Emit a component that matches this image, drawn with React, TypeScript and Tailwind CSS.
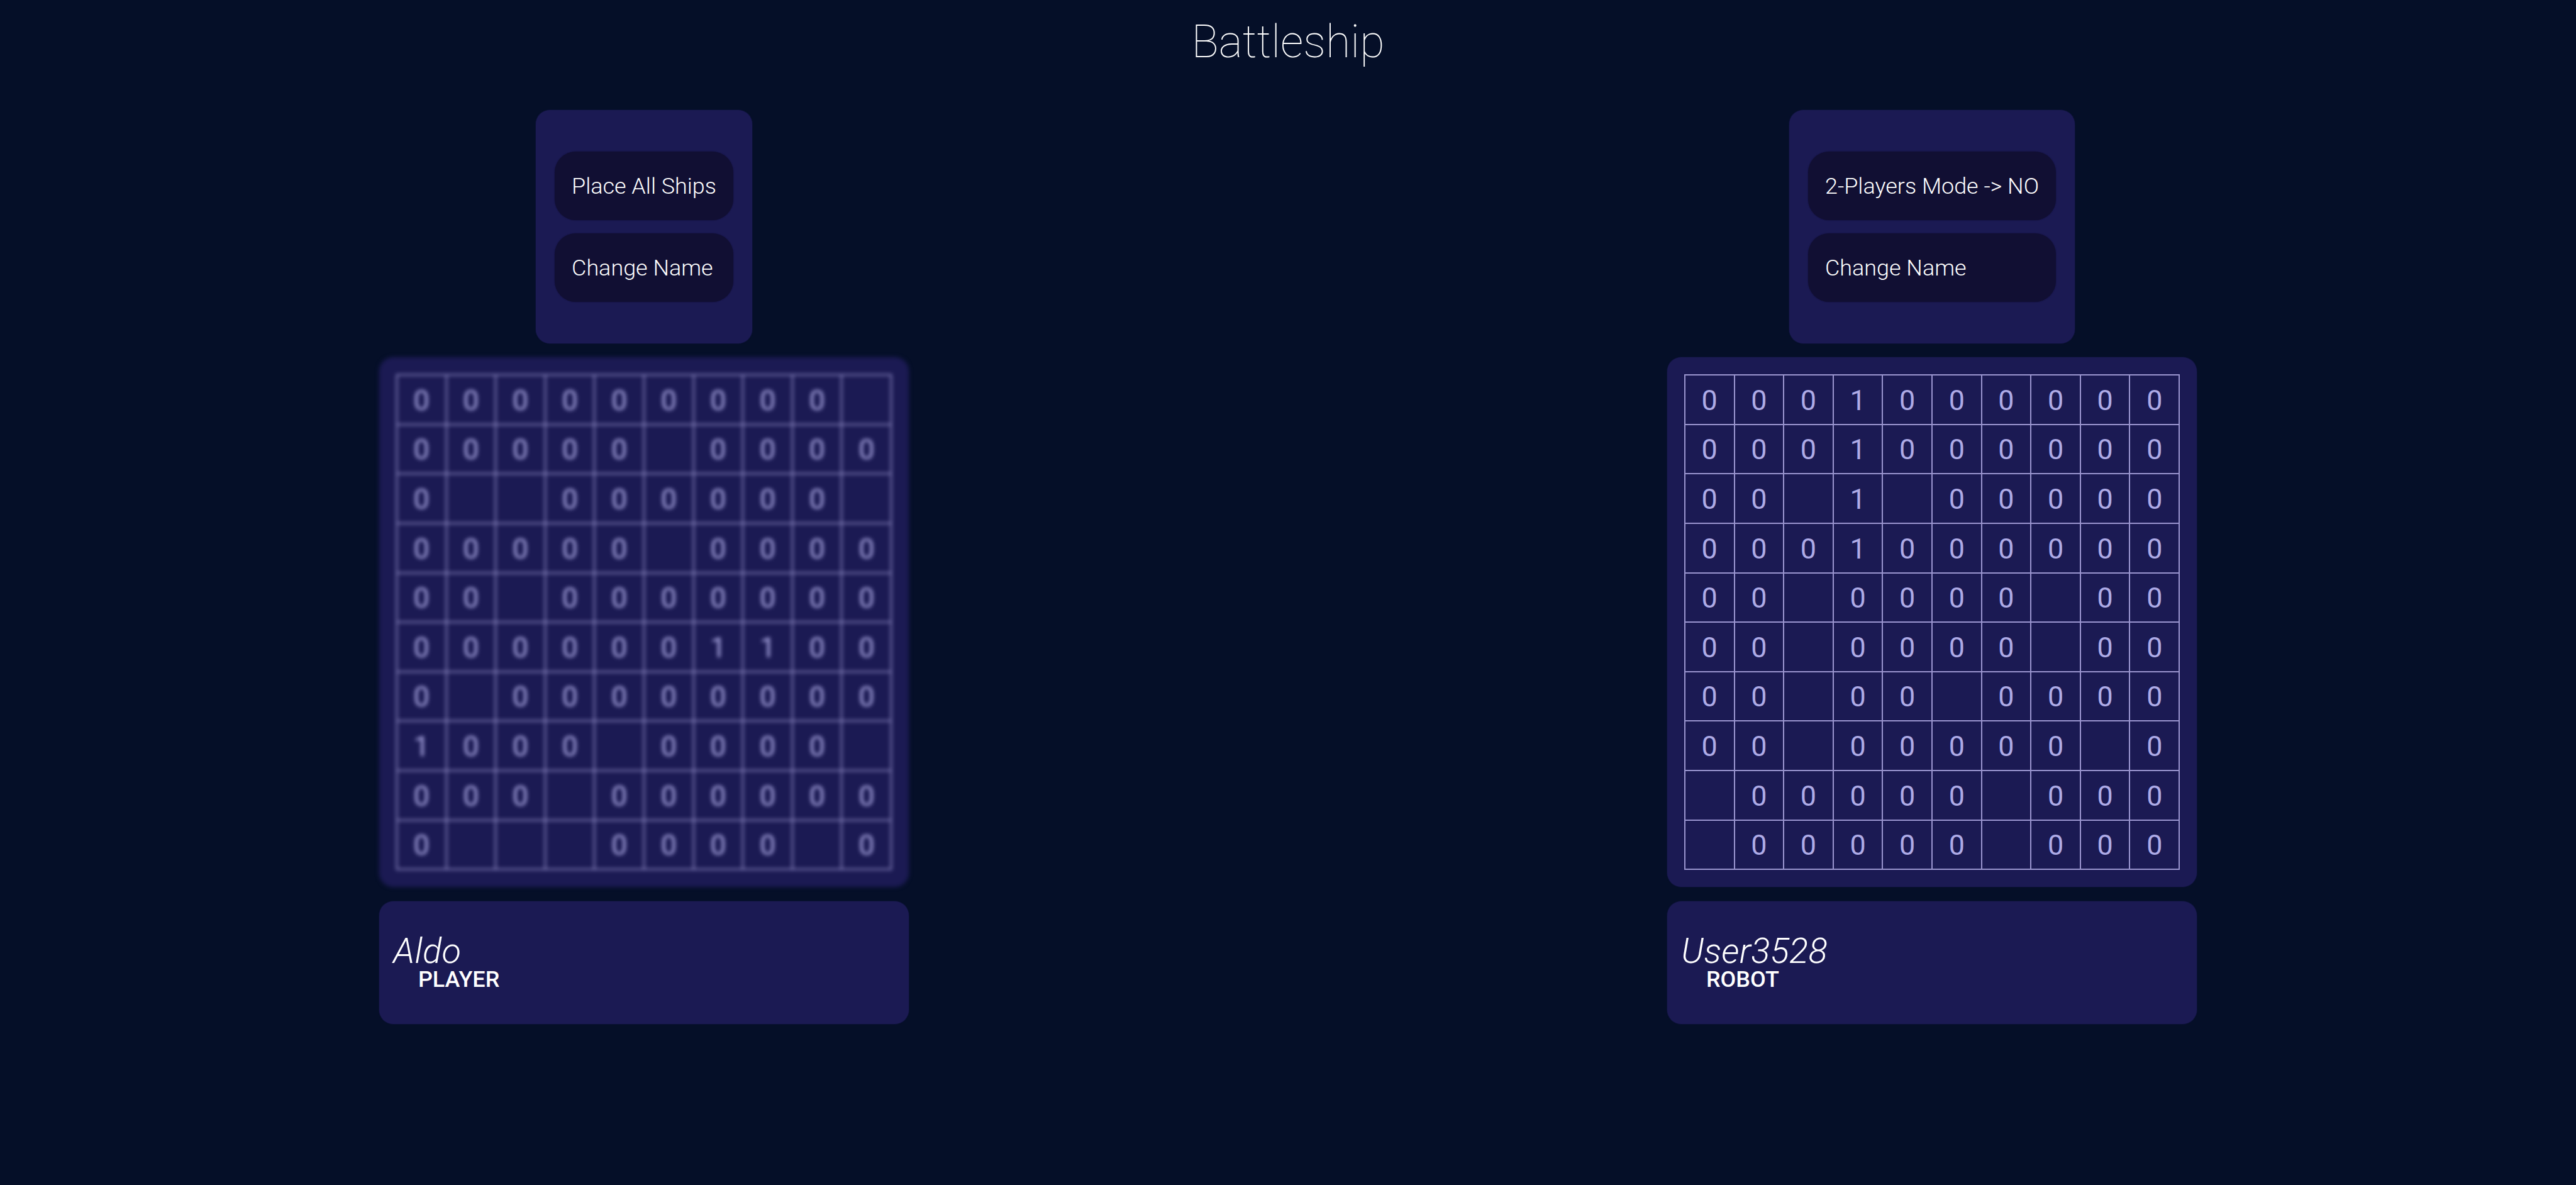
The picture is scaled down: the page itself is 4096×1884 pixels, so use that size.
const LEFT = [
  "000000000 ",
  "00000 0000",
  "0  000000 ",
  "00000 0000",
  "00 0000000",
  "0000001100",
  "0 00000000",
  "1000 0000 ",
  "000 000000",
  "0   0000 0",
];

const RIGHT = [
  "0001000000",
  "0001000000",
  "00 1 00000",
  "0001000000",
  "00 0000 00",
  "00 0000 00",
  "00 00 0000",
  "00 00000 0",
  " 00000 000",
  " 00000 000",
];

function Menu({ items }: { items: string[] }) {
  return (
    <div className="flex h-[370.5px] flex-col justify-center gap-[20.6px] rounded-[22.5px] bg-[#1b1a53] px-[29.6px] shadow-[0_0_2px_#1b1a53]">
      {items.map((item) => (
        <button
          key={item}
          className="flex h-[109.6px] items-center rounded-[33.7px] bg-[#110f33] px-[27px] pt-[3px] text-left text-[35.93px] font-light whitespace-nowrap text-white shadow-[0_0_2px_#110f33]"
        >
          {item}
        </button>
      ))}
    </div>
  );
}

function Board({ rows, blurred }: { rows: string[]; blurred?: boolean }) {
  return (
    <div
      className={
        "flex size-[842.1px] items-center justify-center rounded-[22.5px] bg-[#1b1a53] shadow-[0_0_2px_#1b1a53] " +
        (blurred ? "blur-[3.3px]" : "")
      }
    >
      <div className="grid size-[788.2px] grid-cols-10 grid-rows-10 border-t-[2.25px] border-l-[2.25px] border-[#9a95cf]">
        {rows.flatMap((row, r) =>
          row.split("").map((cell, c) => (
            <div
              key={`${r}-${c}`}
              className="flex items-center justify-center border-r-[2.25px] border-b-[2.25px] border-[#9a95cf] pt-[3.5px] text-[44.91px] leading-none text-[#aeabe6]"
            >
              {cell.trim()}
            </div>
          )),
        )}
      </div>
    </div>
  );
}

function Info({ name, kind }: { name: string; kind: string }) {
  return (
    <div className="flex h-[195.4px] w-[842.1px] flex-col justify-center rounded-[22.5px] bg-[#1b1a53] pt-[5px] pl-[22.4px] text-white shadow-[0_0_2px_#1b1a53]">
      <div className="text-[56.14px] leading-[48px] font-light tracking-[0.25px] italic">{name}</div>
      <div className="pl-[39.6px] text-[35.93px] leading-[42px] font-medium">{kind}</div>
    </div>
  );
}

interface SideProps {
  menu: string[];
  rows: string[];
  blurred?: boolean;
  name: string;
  kind: string;
}

function Side({ menu, rows, blurred, name, kind }: SideProps) {
  return (
    <section className="flex flex-1 flex-col items-center gap-[22.5px]">
      <Menu items={menu} />
      <Board rows={rows} blurred={blurred} />
      <Info name={name} kind={kind} />
    </section>
  );
}

export default function App() {
  return (
    <div className="flex h-[1884px] w-[4096px] flex-col overflow-hidden bg-[#050f28] font-['Roboto',sans-serif]">
      <h1 className="h-[175.2px] pt-[24.5px] text-center text-[71.86px] leading-[84px] font-thin text-white">
        Battleship
      </h1>
      <main className="flex">
        <Side menu={["Place All Ships", "Change Name"]} rows={LEFT} blurred name="Aldo" kind="PLAYER" />
        <Side menu={["2-Players Mode -> NO", "Change Name"]} rows={RIGHT} name="User3528" kind="ROBOT" />
      </main>
    </div>
  );
}
